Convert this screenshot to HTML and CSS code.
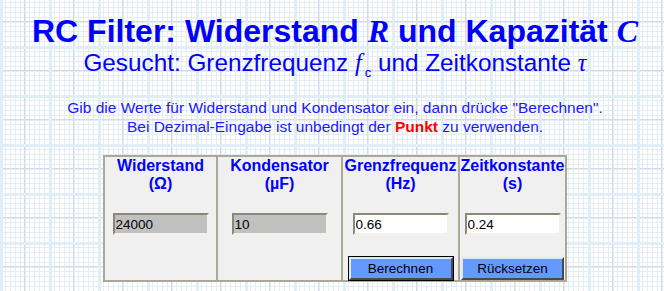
FILE: index.html
```html
<!DOCTYPE html>
<html>

	<head>
		<meta charset="UTF-8">
		<title>RC Filter</title>
		<link rel="stylesheet" href="styles.css">
	</head>

	<body>
		<div class="page">
			<h1 class="title">RC Filter: Widerstand <i class="sym">R</i> und Kapazität <i class="sym">C</i></h1>
			<h2 class="subtitle">Gesucht: Grenzfrequenz <i class="sym">f</i><sub>c</sub> und Zeitkonstante <i class="sym">&tau;</i></h2>
			<p class="hint">Gib die Werte für Widerstand und Kondensator ein, dann drücke "Berechnen".<br>Bei Dezimal-Eingabe ist unbedingt der <b class="warn">Punkt</b> zu verwenden.</p>

			<form class="panel">
				<div class="col col-r">
					<div class="head">Widerstand<br>(&Omega;)</div>
					<input class="field locked" type="text" value="24000" readonly>
				</div>
				<div class="col col-c">
					<div class="head">Kondensator<br>(&micro;F)</div>
					<input class="field locked" type="text" value="10" readonly>
				</div>
				<div class="col col-f">
					<div class="head">Grenzfrequenz<br>(Hz)</div>
					<input class="field" type="text" value="0.66">
					<button class="btn btn-main" type="button">Berechnen</button>
				</div>
				<div class="col col-t">
					<div class="head">Zeitkonstante<br>(s)</div>
					<input class="field" type="text" value="0.24">
					<button class="btn btn-reset" type="reset">Rücksetzen</button>
				</div>
			</form>
		</div>
	</body>

</html>
```

FILE: styles.css
```css
* {
	margin: 0;
	padding: 0;
	box-sizing: border-box;
}

/* Millimeterpapier */
html {
	background-color: #fff;
	background-image:
		linear-gradient(to right, #e1eef6 0 3px, transparent 3px),
		linear-gradient(to bottom, #e1eef6 0 3px, transparent 3px),
		linear-gradient(to right, transparent 24px, #d9d8e6 24px 25px, transparent 25px),
		linear-gradient(to bottom, transparent 24px, #d9d8e6 24px 25px, transparent 25px),
		repeating-linear-gradient(to right, #e4edf4 0 1px, transparent 1px 4.9px),
		repeating-linear-gradient(to bottom, #e4edf4 0 1px, transparent 1px 4.9px);
	background-size: 49px 49px;
	background-position: 0 46px;
	min-height: 100%;
}

body {
	font-family: "Liberation Sans", Arial, sans-serif;
	color: #0000ff;
}

.page {
	padding: 13px 0 0 6px;
	text-align: center;
}

.title {
	font-size: 32px;
	line-height: 36px;
	font-weight: bold;
	white-space: nowrap;
}

.title .sym {
	font-family: "Liberation Serif", "Times New Roman", serif;
	font-style: italic;
	font-weight: bold;
}

.subtitle {
	font-size: 24.3px;
	line-height: 28px;
	font-weight: normal;
	white-space: nowrap;
}

.subtitle .sym {
	font-family: "Liberation Serif", "Times New Roman", serif;
	font-style: italic;
}

.subtitle sub {
	font-size: 13px;
	line-height: 0;
	vertical-align: -6px;
	margin-left: 3px;
}

.hint {
	margin-top: 21px;
	font-size: 15.5px;
	line-height: 19px;
	color: #1a1aff;
}

.warn {
	color: #ff0000;
}

.panel {
	display: flex;
	gap: 2px;
	width: fit-content;
	margin: 19px auto 0;
	padding: 2px;
	background: #aca899;
	text-align: center;
}

.col {
	display: flex;
	flex-direction: column;
	align-items: center;
	background: #f0f0f0;
}

.col-r { width: 111px; }
.col-c { width: 123px; }
.col-f { width: 115px; }
.col-t { width: 105px; }

.head {
	font-size: 16px;
	line-height: 18px;
	font-weight: bold;
	color: #0000ff;
	white-space: nowrap;
}

.field {
	margin-top: 20px;
	width: 96px;
	height: 22px;
	padding: 0 1px;
	border: 2px solid;
	border-color: #8a877b #f4f2e8 #f4f2e8 #8a877b;
	background: #fff;
	font-family: "Liberation Sans", Arial, sans-serif;
	font-size: 13.5px;
	color: #000;
}

.field.locked {
	background: #c0c0c0;
}

.btn {
	margin-top: 22px;
	height: 23px;
	border: 2px solid;
	border-color: #dfe8ff #4a4a4a #4a4a4a #dfe8ff;
	background: #6699ff;
	font-family: "Liberation Sans", Arial, sans-serif;
	font-size: 13.5px;
	color: #000;
	cursor: pointer;
}

.btn-main {
	width: 104px;
	box-shadow: 0 0 0 1px #000;
}

.btn-reset {
	width: 103px;
}
```
